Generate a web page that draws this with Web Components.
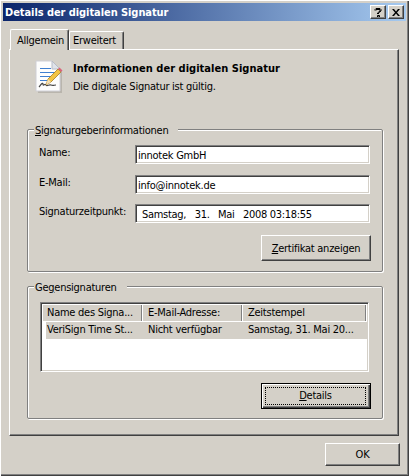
<!DOCTYPE html>
<html lang="de">
<head>
<meta charset="utf-8">
<title>Details der digitalen Signatur</title>
<style>
html, body { margin: 0; padding: 0; background: #d4d0c8; }
body { font: 11px "DejaVu Sans Condensed", "DejaVu Sans", sans-serif; letter-spacing: -.25px; color: #000; }
</style>
</head>
<body>

<win-dialog caption="Details der digitalen Signatur">
  <win-tabs>
    <win-tab slot="tabs" active>Allgemein</win-tab>
    <win-tab slot="tabs">Erweitert</win-tab>

    <win-status heading="Informationen der digitalen Signatur">Die digitale Signatur ist gültig.</win-status>

    <win-group style="height:143px; margin-top:32px">
      <span slot="legend"><u>S</u>ignaturgeberinformationen</span>
      <win-field label="Name:" value="innotek GmbH"></win-field>
      <win-field label="E-Mail:" value="info@innotek.de" style="margin-top:11px"></win-field>
      <win-field label="Signaturzeitpunkt:" value="Samstag,   31.   Mai   2008 03:18:55" inset style="margin-top:10px"></win-field>
      <win-button width="110" style="margin-top:12px">
        <u>Z</u>ertifikat anzeigen
      </win-button>
    </win-group>

    <win-group style="height:133px; margin-top:14px">
      <span slot="legend">Ge<u>g</u>ensignaturen</span>
      <win-list columns="Name des Signa...|E-Mail-Adresse:|Zeitstempel"
                row="VeriSign Time St...|Nicht verfügbar|Samstag, 31. Mai 20..."></win-list>
      <win-button width="110" default style="margin-top:11px"><u>D</u>etails</win-button>
    </win-group>
  </win-tabs>
  <win-button slot="footer" width="75" height="23">OK</win-button>
</win-dialog>

<script>
const raised = `
  border: 1px solid;
  border-color: #fff #404040 #404040 #fff;
  box-shadow: inset -1px -1px 0 #808080;
  background: #d4d0c8;
  box-sizing: border-box;
`
const sunken = `
  border: 1px solid;
  border-color: #808080 #fff #fff #808080;
  box-shadow: inset 1px 1px 0 #404040, inset -1px -1px 0 #d4d0c8;
  box-sizing: border-box;
`

customElements.define('win-dialog', class extends HTMLElement {
    constructor() {
        super()
        let sr = this.attachShadow({mode: 'open'})
        sr.innerHTML = `
<style>
:host {
  display: flex;
  flex-direction: column;
  width: 409px;
  height: 476px;
  box-sizing: border-box;
  padding: 3px;
  background: #d4d0c8;
  box-shadow: inset 1px 1px 0 #fff, inset -1px -1px 0 #404040, inset -2px -2px 0 #808080;
}

#bar {
  height: 18px;
  flex: none;
  display: flex;
  align-items: center;
  padding: 0 2px;
  color: #fff;
  font-weight: bold;
  font-size: 11px;
  letter-spacing: -.07px;
  background: linear-gradient(to right, #0a246a, #a6caf0);
}

#caption { flex: 1; white-space: nowrap; }

.ctl {
  width: 16px;
  height: 14px;
  margin-left: 2px;
  display: flex;
  align-items: center;
  justify-content: center;
  ${raised}
}

#body { padding: 8px 0 0 6px; }

#footer {
  display: flex;
  justify-content: flex-end;
  padding: 7px 6px 0 0;
}
</style>
<div id="bar">
  <span id="caption">${this.getAttribute('caption')}</span>
  <span class="ctl">
    <svg width="8" height="9" viewBox="0 0 8 9"><path d="M1 2.5V1.5L2 0.5H6L7 1.5V3L4.5 5V6M3.5 6V5L6 3V1.5H2V2.5M3.5 7.5H5.5V9H3.5Z" fill="none" stroke="#000"/></svg>
  </span>
  <span class="ctl">
    <svg width="8" height="7" viewBox="0 0 8 7"><path d="M0 0H2L4 2.5L6 0H8L5 3.5L8 7H6L4 4.5L2 7H0L3 3.5Z" fill="#000"/></svg>
  </span>
</div>
<div id="body"><slot></slot></div>
<div id="footer"><slot name="footer"></slot></div>`
    }
})

customElements.define('win-tabs', class extends HTMLElement {
    constructor() {
        super()
        let sr = this.attachShadow({mode: 'open'})
        sr.innerHTML = `
<style>
:host { display: block; width: 390px; }

#strip {
  height: 20px;
  display: flex;
  align-items: flex-end;
  padding-left: 1px;
}

#page {
  height: 387px;
  box-sizing: border-box;
  padding: 11px 16px 0 17px;
  border: 1px solid;
  border-color: #fff #404040 #404040 #fff;
  box-shadow: inset -1px -1px 0 #808080;
}
</style>
<div id="strip"><slot name="tabs"></slot></div>
<div id="page"><slot></slot></div>`
    }
})

customElements.define('win-tab', class extends HTMLElement {
    constructor() {
        super()
        let sr = this.attachShadow({mode: 'open'})
        sr.innerHTML = `
<style>
:host {
  display: block;
  box-sizing: border-box;
  width: 55px;
  height: 18px;
  padding: 2px 0 0 3px;
  border: 1px solid;
  border-color: #fff #404040 transparent #fff;
  border-bottom: 0;
  border-radius: 2px 2px 0 0;
  box-shadow: inset -1px 0 0 #808080;
  background: #d4d0c8;
}
:host([active]) {
  width: 59px;
  height: 21px;
  margin-bottom: -1px;
  padding: 4px 0 0 6px;
  position: relative;
  z-index: 1;
}
</style>
<slot></slot>`
    }
})

customElements.define('win-status', class extends HTMLElement {
    constructor() {
        super()
        let sr = this.attachShadow({mode: 'open'})
        sr.innerHTML = `
<style>
:host {
  display: flex;
  height: 36px;
  align-items: flex-start;
  padding-left: 8px;
}

svg { flex: none; margin: -1px 6px 0 0; }

#copy { padding-top: 1px; }

b {
  display: block;
  font-size: 11px;
  letter-spacing: .03px;
  line-height: 14px;
  margin-bottom: 4px;
}

#text { line-height: 14px; }
</style>
<svg width="32" height="34" viewBox="0 0 32 34">
  <path d="M2 2H18L26 10V32H2Z" fill="#b9b5ad" transform="translate(1 1)"/>
  <path d="M1 1H17L25 9V31H1Z" fill="#fdfdfd" stroke="#cfcfd6"/>
  <path d="M17 1V9H25Z" fill="#dfe3ea" stroke="#b8bcc6"/>
  <path d="M5 8.5H16M5 12.5H20M5 16.5H19M5 20.5H15" stroke="#3f7fd0" stroke-width="1.2"/>
  <path d="M4 27C6 25 7 22 8 24C8 27 10 23 11 25C12 27 14 24 16 25C18 26 19 25 21 25" fill="none" stroke="#444" stroke-width="1.2"/>
  <path d="M11 25L13 19L23 9L26 12L16 22Z" fill="#f3c443" stroke="#a87f22" stroke-width=".8"/>
  <path d="M11 25L13 19L16 22Z" fill="#f4dfb6"/>
  <path d="M23 9L24.5 7.5L27.5 10.5L26 12Z" fill="#d9657a"/>
</svg>
<div id="copy">
  <b>${this.getAttribute('heading')}</b>
  <div id="text"><slot></slot></div>
</div>`
    }
})

customElements.define('win-group', class extends HTMLElement {
    constructor() {
        super()
        let sr = this.attachShadow({mode: 'open'})
        sr.innerHTML = `
<style>
:host {
  display: block;
  position: relative;
  width: 356px;
  box-sizing: border-box;
  padding: 15px 11px 0 11px;
  border: 1px solid #808080;
  border-radius: 2px;
  box-shadow: inset 1px 1px 0 #fff, 1px 1px 0 #fff;
}

#legend {
  position: absolute;
  top: -7px;
  left: 6px;
  padding: 0 10px 0 1px;
  line-height: 15px;
  background: #d4d0c8;
}
</style>
<div id="legend"><slot name="legend"></slot></div>
<slot></slot>`
    }
})

customElements.define('win-field', class extends HTMLElement {
    constructor() {
        super()
        let sr = this.attachShadow({mode: 'open'})
        sr.innerHTML = `
<style>
:host { display: flex; align-items: flex-start; }

label { width: 96px; flex: none; line-height: 14px; margin-top: 1px; }

#box {
  width: 235px;
  height: 19px;
  line-height: 17px;
  padding: 1px 0 0 2px;
  white-space: pre;
  background: #fff;
  ${sunken}
}
:host([inset]) #box { padding-left: 6px; letter-spacing: -.3px; }
</style>
<label>${this.getAttribute('label')}</label>
<div id="box">${this.getAttribute('value')}</div>`
    }
})

customElements.define('win-button', class extends HTMLElement {
    constructor() {
        super()
        let w = this.getAttribute('width') || 75
        let h = this.getAttribute('height') || 26
        let sr = this.attachShadow({mode: 'open'})
        sr.innerHTML = `
<style>
:host {
  display: flex;
  align-items: center;
  justify-content: center;
  width: ${w}px;
  height: ${h}px;
  margin-left: auto;
  ${raised}
}
:host([default]) {
  border: 1px solid #000;
  box-shadow: inset 1px 1px 0 #fff, inset -1px -1px 0 #404040, inset -2px -2px 0 #808080;
  padding: 3px;
}
#focus {
  display: flex;
  align-items: center;
  justify-content: center;
  width: 100%;
  height: 100%;
  box-sizing: border-box;
}
:host([default]) #focus { border: 1px dotted #000; margin: 0 1px 1px 0; }
</style>
<div id="focus"><span><slot></slot></span></div>`
    }
})

customElements.define('win-list', class extends HTMLElement {
    constructor() {
        super()
        let cols = this.getAttribute('columns').split('|')
        let row = this.getAttribute('row').split('|')
        let sr = this.attachShadow({mode: 'open'})
        sr.innerHTML = `
<style>
:host {
  display: block;
  width: 329px;
  height: 70px;
  margin-left: 1px;
  padding: 2px;
  background: #fff;
  ${sunken}
}

#head, #row { display: grid; grid-template-columns: 100px 100px 124px; }

#head { height: 16px; background: #d4d0c8; }
#head span {
  padding-left: 5px;
  line-height: 15px;
  box-shadow: inset -1px 0 0 #fff, inset -2px 0 0 #808080;
  white-space: nowrap;
}
#head span:first-child { padding-left: 4px; }

#row {
  margin: 1px 0 0 3px;
  width: 321px;
  height: 17px;
  grid-template-columns: 101px 100px 120px;
  line-height: 16px;
  background: #d4d0c8;
  white-space: nowrap;
}
#row span { padding-left: 1px; }
</style>
<div id="head">${cols.map(c => `<span>${c}</span>`).join('')}</div>
<div id="row">${row.map(c => `<span>${c}</span>`).join('')}</div>`
    }
})
</script>
</body>
</html>
